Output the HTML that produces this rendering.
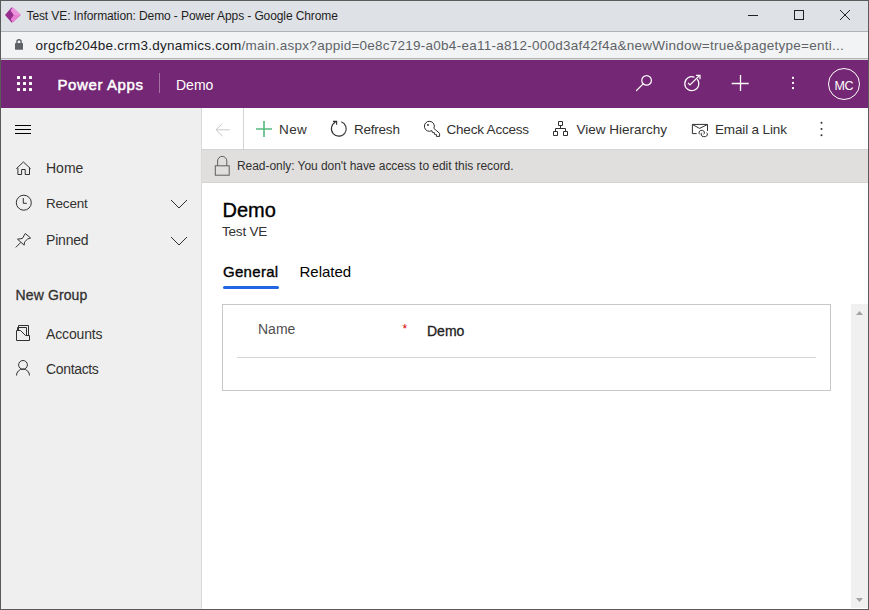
<!DOCTYPE html>
<html><head><meta charset="utf-8">
<style>
*{margin:0;padding:0;box-sizing:border-box}
html,body{width:869px;height:610px;overflow:hidden;background:#fff;font-family:"Liberation Sans",sans-serif}
.a{position:absolute}
.t{position:absolute;white-space:nowrap;line-height:1}
svg{position:absolute;overflow:visible}
</style></head><body>
<!-- title bar -->
<div class="a" style="left:0;top:0;width:869px;height:31px;background:#dee1e6"></div>
<div class="a" style="left:0;top:31px;width:869px;height:1px;background:#b0b1b3"></div>
<!-- address bar -->
<div class="a" style="left:0;top:32px;width:869px;height:26px;background:#f1f3f4"></div>
<div class="a" style="left:0;top:58px;width:869px;height:1px;background:#b4b4b4"></div>
<div class="a" style="left:0;top:59px;width:869px;height:1px;background:#dadcdf"></div>
<!-- purple header -->
<div class="a" style="left:0;top:60px;width:869px;height:48px;background:#742774"></div>
<!-- sidebar -->
<div class="a" style="left:0;top:108px;width:201px;height:502px;background:#efefef"></div>
<div class="a" style="left:201px;top:108px;width:1px;height:502px;background:#d8d8d8"></div>
<!-- command bar divider -->
<div class="a" style="left:243px;top:108px;width:1px;height:41px;background:#d4d4d4"></div>
<!-- readonly bar -->
<div class="a" style="left:202px;top:149px;width:667px;height:34px;background:#e0dfde;border-top:1px solid #d4d3d2;border-bottom:1px solid #d4d3d2"></div>
<!-- form -->
<div class="a" style="left:222px;top:304px;width:609px;height:87px;border:1px solid #c8c8c8"></div>
<div class="a" style="left:237px;top:357px;width:579px;height:1px;background:#d6d6d6"></div>
<!-- tab underline -->
<div class="a" style="left:223px;top:286px;width:56px;height:3px;background:#2266e3;border-radius:2px"></div>
<!-- scrollbar -->
<div class="a" style="left:851px;top:304px;width:17px;height:304px;background:#f0f0f0"></div>
<svg style="left:0;top:0" width="869" height="610" fill="none">
 <!-- window controls -->
 <path d="M748 15.5H758" stroke="#202124" stroke-width="1"/>
 <rect x="794.5" y="10.5" width="9" height="9" stroke="#202124" stroke-width="1"/>
 <path d="M840 10L850 20M850 10L840 20" stroke="#202124" stroke-width="1"/>
 <!-- power apps logo -->
 <path d="M5 15L11.7 7.2L19 15L11.7 22.8Z" fill="#982d90"/>
 <path d="M12.8 7.2L21 15L12.8 22.8L10.7 19.2L13.8 15L10.7 10.6Z" fill="#e57dd0"/>
 <path d="M12.8 7.2L21 15L13.8 15L10.7 10.6Z" fill="#ea93da"/>
 <!-- address lock -->
 <rect x="15" y="43" width="8" height="6.8" rx="0.6" fill="#5f6368"/>
 <path d="M16.9 43.5V41.8A2.1 2.1 0 0 1 21.1 41.8V43.5" stroke="#5f6368" stroke-width="1.4"/>
 <!-- grid -->
 <g fill="#fff">
  <rect x="17" y="76" width="3" height="3" rx="0.5"/><rect x="23" y="76" width="3" height="3" rx="0.5"/><rect x="29" y="76" width="3" height="3" rx="0.5"/>
  <rect x="17" y="82" width="3" height="3" rx="0.5"/><rect x="23" y="82" width="3" height="3" rx="0.5"/><rect x="29" y="82" width="3" height="3" rx="0.5"/>
  <rect x="17" y="88" width="3" height="3" rx="0.5"/><rect x="23" y="88" width="3" height="3" rx="0.5"/><rect x="29" y="88" width="3" height="3" rx="0.5"/>
 </g>
 <!-- search -->
 <circle cx="646.6" cy="80.4" r="4.8" stroke="#fff" stroke-width="1.2"/>
 <path d="M643.2 83.8L636.5 90.5" stroke="#fff" stroke-width="1.2" stroke-linecap="round"/>
 <!-- task flow -->
 <path d="M697.2 79.2A7 7 0 1 1 694.5 77.2" stroke="#fff" stroke-width="1.2"/>
 <path d="M688 82.8L690 85L699.3 75.8" stroke="#fff" stroke-width="1.2"/>
 <path d="M696 75.3H700V79.3" stroke="#fff" stroke-width="1.2"/>
 <!-- plus -->
 <path d="M731.7 83.5H748.7M740.5 75V91" stroke="#fff" stroke-width="1.3"/>
 <!-- more -->
 <rect x="792" y="76.8" width="2" height="2" fill="#fff"/><rect x="792" y="81.9" width="2" height="2" fill="#fff"/><rect x="792" y="87.1" width="2" height="2" fill="#fff"/>
 <!-- avatar -->
 <circle cx="844" cy="84" r="15.5" stroke="#fff" stroke-width="1"/>
 <!-- hamburger -->
 <path d="M15 125.5H31M15 129.5H31M15 133.5H31" stroke="#000" stroke-width="1"/>
 <!-- home -->
 <path d="M16.3 168.7L23.4 162L30.6 168.7M17.9 168V174.5H21.6V169.5H25.2V174.5H29.5V168" stroke="#323130" stroke-width="1"/>
 <!-- clock -->
 <circle cx="23.8" cy="202.7" r="7.5" stroke="#323130" stroke-width="1"/>
 <path d="M23.3 198V203.3H26.8" stroke="#323130" stroke-width="1"/>
 <!-- pin -->
 <path d="M17.5 239.2L22.3 238.5L25.3 233.5L30.6 238L27.6 239L24.5 242L24.2 245.2Z" stroke="#323130" stroke-width="1" stroke-linejoin="round"/>
 <path d="M15.8 247.4L20.8 242.4" stroke="#323130" stroke-width="1"/>
 <!-- chevrons -->
 <path d="M171 200L179 208L187 200M171 237L179 245L187 237" stroke="#323130" stroke-width="1"/>
 <!-- accounts -->
 <path d="M18.5 330.5V325.5H28.5V335.5M17.5 330.5V327.5H26.5V335.5M16.5 330.5H20.5L25.5 335.5H29.5V340.5H16.5Z" stroke="#323130" stroke-width="1"/>
 <!-- contacts -->
 <circle cx="23" cy="364.9" r="4.4" stroke="#323130" stroke-width="1"/>
 <path d="M16.5 375.5A6.5 6.5 0 0 1 29.5 375.5" stroke="#323130" stroke-width="1"/>
 <!-- back -->
 <path d="M222.4 123.5L216 129.8L222.4 136.1M216.5 129.8H229.7" stroke="#c8c8c8" stroke-width="1"/>
 <!-- new plus -->
 <path d="M256 129H272M264 121V137" stroke="#56b87e" stroke-width="1.6"/>
 <!-- refresh -->
 <path d="M341.3 121.8A7.4 7.4 0 1 1 335.6 122.1" stroke="#323130" stroke-width="1.1"/>
 <path d="M333 121.4H336.6V124.8" stroke="#323130" stroke-width="1.1"/>
 <!-- key -->
 <path d="M431.9 130.6A5 5 0 1 1 433.9 128.4L439.6 133.3V136.4H436.4V134.5L434.4 134.3V132.7L432.3 132.3Z" stroke="#323130" stroke-width="1" stroke-linejoin="round"/>
 <rect x="427.1" y="124.1" width="1.7" height="1.7" fill="#323130"/>
 <!-- hierarchy -->
 <path d="M558.5 121.5H562.5V125.5H558.5Z M553.5 131.5H557.5V135.5H553.5Z M563.5 131.5H567.5V135.5H563.5Z M560.5 125.5V128.5M555.5 131.5V128.5H565.5V131.5" stroke="#323130" stroke-width="1"/>
 <!-- email -->
 <path d="M696.7 133.6H692.4V124.4H707.5V131" stroke="#323130" stroke-width="1"/>
 <path d="M692.6 124.6L699.6 128.4L707.3 124.6" stroke="#323130" stroke-width="1"/>
 <path d="M699.6 134.3A2.4 2.4 0 0 1 700.8 130.4H702.6A2.3 2.3 0 0 1 703.6 134.4" stroke="#323130" stroke-width="1"/>
 <path d="M701.8 132.7A2.3 2.3 0 0 0 703.2 136.6H705.4A2.3 2.3 0 0 0 706.6 132.6" stroke="#323130" stroke-width="1"/>
 <!-- more cmd -->
 <circle cx="821.5" cy="122.8" r="1" fill="#323130"/><circle cx="821.5" cy="129" r="1" fill="#323130"/><circle cx="821.5" cy="135.2" r="1" fill="#323130"/>
 <!-- readonly lock -->
 <rect x="215.3" y="165.8" width="13.9" height="9.4" stroke="#605e5c" stroke-width="1"/>
 <path d="M217.6 165.8V161A4.6 4.6 0 0 1 226.8 161V165.8" stroke="#605e5c" stroke-width="1"/>
 <!-- asterisk -->
 <text x="402.5" y="333" font-family="Liberation Sans" font-size="12" fill="#e00000">*</text>
 <!-- scroll arrows -->
 <path d="M856 315L859.5 311L863 315Z" fill="#a3a3a3"/>
 <path d="M856 598L859.5 602L863 598Z" fill="#a3a3a3"/>
</svg>
<!-- window border -->
<div class="a" style="left:0;top:0;width:869px;height:610px;border:1px solid #5a5a5a"></div>

<!-- texts -->
<div class="t" id="t_title" style="left:26.5px;top:10px;font-size:12px;letter-spacing:-0.1px;color:#1e1e1e">Test VE: Information: Demo - Power Apps - Google Chrome</div>
<div class="t" id="t_url" style="left:35.5px;top:38.5px;font-size:13.5px;letter-spacing:0.25px;color:#5f6368"><span style="color:#202124">orgcfb204be.crm3.dynamics.com</span>/main.aspx?appid=0e8c7219-a0b4-ea11-a812-000d3af42f4a&amp;newWindow=true&amp;pagetype=enti...</div>
<div class="t" id="t_brand" style="left:57.5px;top:76.5px;font-size:15px;letter-spacing:0.6px;-webkit-text-stroke:0.5px #fff;color:#fff">Power Apps</div>
<div class="a" style="left:159px;top:73px;width:1px;height:20px;background:rgba(255,255,255,0.35)"></div>
<div class="t" id="t_app" style="left:176px;top:78px;font-size:14px;color:#fff">Demo</div>
<div class="t" id="t_mc" style="left:834.5px;top:79.5px;font-size:12.5px;letter-spacing:-0.3px;color:#fff">MC</div>

<div class="t" id="t_home" style="left:46px;top:161px;font-size:14px;color:#323130">Home</div>
<div class="t" id="t_recent" style="left:46px;top:196.5px;font-size:13.5px;letter-spacing:-0.2px;color:#323130">Recent</div>
<div class="t" id="t_pinned" style="left:46px;top:233px;font-size:14px;letter-spacing:-0.2px;color:#323130">Pinned</div>
<div class="t" id="t_group" style="left:15.5px;top:288px;font-size:14px;letter-spacing:0.12px;-webkit-text-stroke:0.3px #323130;color:#323130">New Group</div>
<div class="t" id="t_accounts" style="left:46px;top:327px;font-size:14px;letter-spacing:-0.15px;color:#323130">Accounts</div>
<div class="t" id="t_contacts" style="left:46px;top:362px;font-size:14px;letter-spacing:-0.34px;color:#323130">Contacts</div>

<div class="t" id="t_new" style="left:279px;top:123px;font-size:13.5px;letter-spacing:0.4px;color:#323130">New</div>
<div class="t" id="t_refresh" style="left:354px;top:123px;font-size:13.5px;letter-spacing:-0.23px;color:#323130">Refresh</div>
<div class="t" id="t_check" style="left:446.5px;top:123px;font-size:13.5px;letter-spacing:-0.2px;color:#323130">Check Access</div>
<div class="t" id="t_hier" style="left:576.5px;top:123px;font-size:13.5px;letter-spacing:0px;color:#323130">View Hierarchy</div>
<div class="t" id="t_email" style="left:715px;top:123px;font-size:13.5px;letter-spacing:-0.15px;color:#323130">Email a Link</div>

<div class="t" id="t_ro" style="left:237px;top:160px;font-size:12px;letter-spacing:-0.05px;color:#323130">Read-only: You don't have access to edit this record.</div>

<div class="t" id="t_demo" style="left:222.5px;top:200px;font-size:20px;-webkit-text-stroke:0.35px #000;color:#000">Demo</div>
<div class="t" id="t_sub" style="left:222px;top:225px;font-size:13.5px;letter-spacing:-0.2px;color:#323130">Test VE</div>
<div class="t" id="t_general" style="left:223px;top:264px;font-size:15px;letter-spacing:0.3px;-webkit-text-stroke:0.35px #000;color:#000">General</div>
<div class="t" id="t_related" style="left:299.5px;top:264px;font-size:15px;color:#000">Related</div>
<div class="t" id="t_name" style="left:258px;top:322px;font-size:14px;color:#505050">Name</div>
<div class="t" id="t_value" style="left:427px;top:324px;font-size:14px;-webkit-text-stroke:0.3px #222;color:#222">Demo</div>
</body></html>
